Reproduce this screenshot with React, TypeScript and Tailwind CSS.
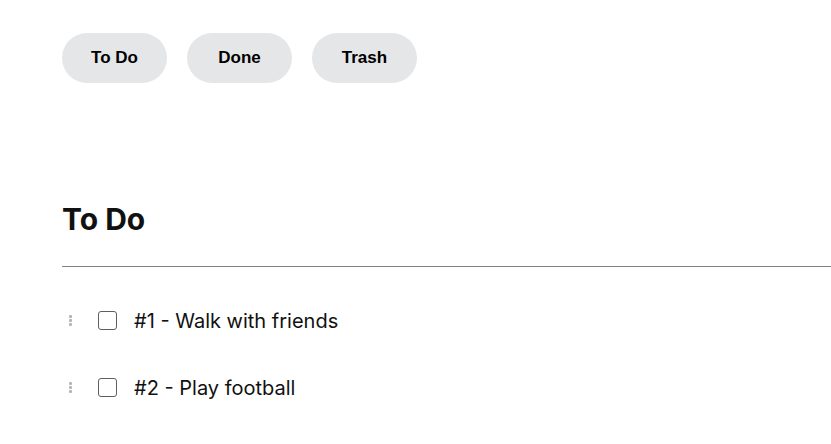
import React from "react";

const tabs = ["To Do", "Done", "Trash"];
const items = ["#1 - Walk with friends", "#2 - Play football"];

function Grip() {
  return (
    <div className="flex w-[4px] flex-col gap-[1px]">
      <span className="block h-[3px] w-[3px] rounded-[1px] bg-[#b5b5b5]" />
      <span className="block h-[3px] w-[3px] rounded-[1px] bg-[#b5b5b5]" />
      <span className="block h-[3px] w-[3px] rounded-[1px] bg-[#b5b5b5]" />
    </div>
  );
}

export default function App() {
  return (
    <div className="min-h-[444px] bg-white pl-[62px] pt-[33px]" style={{ fontFamily: "Inter, 'Liberation Sans', sans-serif" }}>
      <div className="flex gap-5">
        {tabs.map((t) => (
          <button
            key={t}
            className="h-[50px] w-[105px] rounded-full bg-[#e5e6e8] text-[17px] font-bold text-black"
            style={{ fontFamily: "'Liberation Sans', Arial, sans-serif" }}
          >
            {t}
          </button>
        ))}
      </div>
      <h2 className="mt-[118px] text-[30px] font-bold leading-[36px] text-[#111]">To Do</h2>
      <div className="mt-[29px] h-px bg-[#808080]" />
      <ul className="pt-[20px]">
        {items.map((it) => (
          <li key={it} className="flex h-[67px] items-center">
            <div className="ml-[7px] w-[29px]">
              <Grip />
            </div>
            <span className="block h-[19px] w-[19px] rounded-[3px] border-[1.5px] border-[#5f5f5f]" />
            <span className="ml-[17px] text-[20px] text-[#111]">{it}</span>
          </li>
        ))}
      </ul>
    </div>
  );
}
